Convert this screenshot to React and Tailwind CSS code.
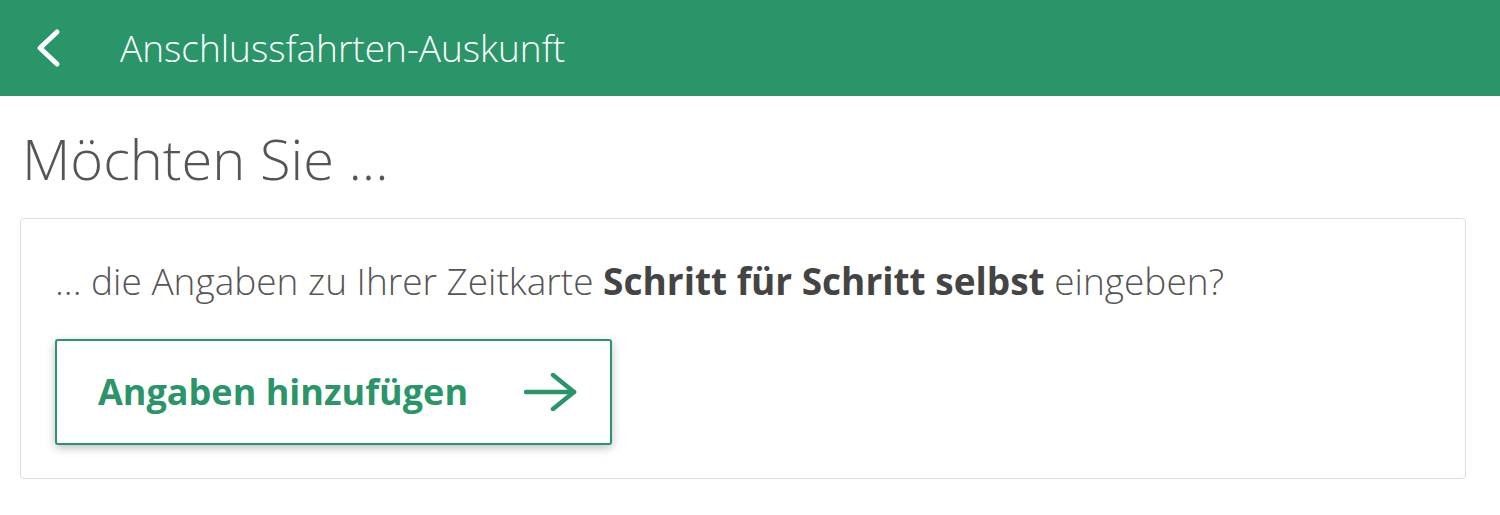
export default function App() {
  return (
    <div className="min-h-screen bg-white font-['Open_Sans',sans-serif]">
      {/* Header */}
      <div className="flex h-[96px] items-center bg-[#2b956a] text-white">
        <div className="flex w-[120px] items-center pl-[35px]">
          <svg width="28" height="40" viewBox="0 0 28 40" fill="none" stroke="white" strokeWidth="5" strokeLinecap="round" strokeLinejoin="round">
            <path d="M22 4L5 20l17 16" />
          </svg>
        </div>
        <h1 className="text-[37px] font-light">Anschlussfahrten-Auskunft</h1>
      </div>

      <div className="px-[20px] pt-[28px]">
        <h2 className="mb-[26px] pl-[2px] text-[56px] leading-[68px] font-light text-[#555]">Möchten Sie ...</h2>

        <div className="w-[1446px] rounded-[4px] border border-[#ddd] px-[34px] pt-[40px] pb-[33px]">
          <p className="text-[37px] leading-[44px] font-light text-[#555]">
            ... die Angaben zu Ihrer Zeitkarte{" "}
            <span className="font-bold text-[#444]">Schritt für Schritt selbst</span> eingeben?
          </p>

          <button className="mt-[36px] flex h-[106px] w-[557px] items-center justify-between rounded-[3px] border-2 border-[#2b956a] bg-white pr-[32px] pl-[41px] shadow-[0_3px_10px_rgba(0,0,0,0.25)]">
            <span className="text-[36px] font-bold text-[#2b956a]">Angaben hinzufügen</span>
            <svg width="54" height="38" viewBox="0 0 54 38" fill="none" stroke="#2b956a" strokeWidth="4.5" strokeLinecap="round" strokeLinejoin="round">
              <path d="M2 19h48" />
              <path d="M29 2l21 17-21 17" />
            </svg>
          </button>
        </div>
      </div>
    </div>
  );
}
